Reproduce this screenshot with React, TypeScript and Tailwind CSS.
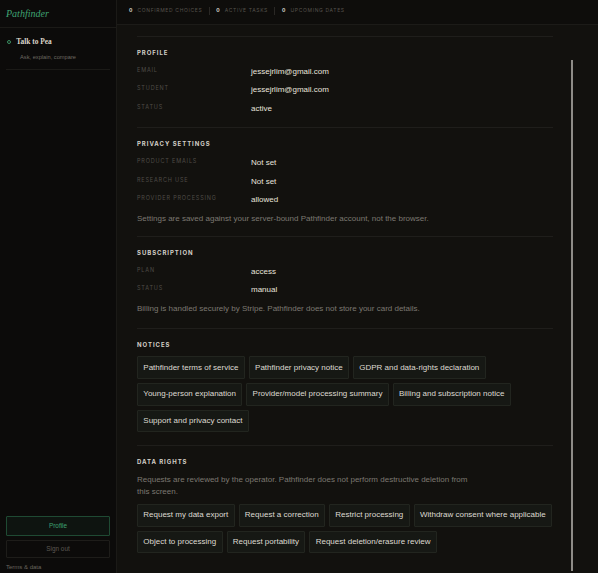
import React from "react";

const sans = { fontFamily: '"Liberation Sans", Arial, sans-serif' };

function Label({ children }: { children: React.ReactNode }) {
  return (
    <div className="w-[114px] shrink-0 font-['Inter',sans-serif] text-[5.5px] uppercase tracking-[0.15em] leading-[14px] text-[#4f4c47]">
      {children}
    </div>
  );
}

function Row({ label, value }: { label: string; value: string }) {
  return (
    <div className="flex items-start h-[18.3px]">
      <Label>{label}</Label>
      <div className="font-['Liberation_Sans',Arial,sans-serif] text-[8px] leading-[18.3px] text-[#e8e4dc]">{value}</div>
    </div>
  );
}

function Heading({ children }: { children: React.ReactNode }) {
  return (
    <div className="font-['Inter',sans-serif] font-bold text-[6px] leading-[8px] uppercase tracking-[0.16em] text-[#d3cfc7]">
      {children}
    </div>
  );
}

function Note({ children, className = "" }: { children: React.ReactNode; className?: string }) {
  return (
    <div className={"font-['Liberation_Sans',Arial,sans-serif] text-[8px] leading-[12.4px] text-[#7c7871] " + className}>
      {children}
    </div>
  );
}

function Btn({ children }: { children: React.ReactNode }) {
  return (
    <div className="h-[22.7px] flex items-center px-[5.3px] border border-[#22251f] bg-[#161814] rounded-[1px] font-['Liberation_Sans',Arial,sans-serif] text-[8px] text-[#dedad2] whitespace-nowrap">
      {children}
    </div>
  );
}

function Stat({ n, label }: { n: string; label: string }) {
  return (
    <div className="flex items-center font-['Inter',sans-serif] text-[5px] uppercase tracking-[0.13em]">
      <span className="font-bold text-[#d8d4cc] mr-[4.5px]">{n}</span>
      <span className="text-[#56534d]">{label}</span>
    </div>
  );
}

function Sep() {
  return <div className="w-px h-[8px] bg-[#2a2825] mx-[6.5px]" />;
}

export default function App() {
  return (
    <div className="flex w-full h-screen overflow-hidden bg-[#12110e]" style={sans}>
      {/* Sidebar */}
      <aside className="w-[117px] shrink-0 flex flex-col bg-[#0c0b0a] border-r border-[#1b1a17]">
        <div className="h-[28px] border-b border-[#1b1a17] flex items-center px-[6px] pb-[1px]">
          <span className="font-['Liberation_Serif',serif] italic text-[10px] text-[#3fa372]">Pathfinder</span>
        </div>
        <div className="mx-[6px] border-b border-[#1b1a17] pt-[9px] pb-[8.6px]">
          <div className="flex items-center h-[10px]">
            <div className="ml-[1.3px] w-[4px] h-[4px] rounded-full border border-[#3a8f62]" />
            <span className="ml-[5px] font-['Liberation_Serif',serif] font-bold text-[7.4px] text-[#dcd6cb]">Talk to Pea</span>
          </div>
          <div className="ml-[14px] mt-[5.7px] leading-[8px] text-[5.7px] text-[#6e6a63]">Ask, explain, compare</div>
        </div>
        <div className="mt-auto px-[6px] pb-[2px] flex flex-col">
          <div className="h-[19.5px] flex items-center justify-center border border-[#1f4a33] bg-[#0e1410] rounded-[1px] text-[6.4px] text-[#3fa372]">Profile</div>
          <div className="mt-[4px] h-[18.5px] flex items-center justify-center border border-[#1e1d1a] rounded-[1px] text-[6.4px] text-[#5c5953]">Sign out</div>
          <div className="mt-[5px] leading-[8px] text-[6px] text-[#6a665f]">Terms &amp; data</div>
        </div>
      </aside>

      {/* Main */}
      <main className="relative flex-1 flex flex-col min-w-0">
        <div className="h-[25px] shrink-0 border-b border-[#1c1b18] bg-[#0e0d0b] flex items-center pl-[12px] pb-[2px]">
          <Stat n="0" label="Confirmed choices" />
          <Sep />
          <Stat n="0" label="Active tasks" />
          <Sep />
          <Stat n="0" label="Upcoming dates" />
        </div>

        <div className="pl-[20px] pt-[11px]">
          <div className="w-[416px]">
            {/* Profile */}
            <section className="border-t border-[#1f1e1b] pt-[12px] pb-[9.5px]">
              <Heading>Profile</Heading>
              <div className="mt-[6px]">
                <Row label="Email" value="jessejrlim@gmail.com" />
                <Row label="Student" value="jessejrlim@gmail.com" />
                <Row label="Status" value="active" />
              </div>
            </section>

            {/* Privacy */}
            <section className="border-t border-[#1f1e1b] pt-[12px] pb-[10.6px]">
              <Heading>Privacy settings</Heading>
              <div className="mt-[6px]">
                <Row label="Product emails" value="Not set" />
                <Row label="Research use" value="Not set" />
                <Row label="Provider processing" value="allowed" />
              </div>
              <Note className="mt-[3.4px]">Settings are saved against your server-bound Pathfinder account, not the browser.</Note>
            </section>

            {/* Subscription */}
            <section className="border-t border-[#1f1e1b] pt-[12px] pb-[13px]">
              <Heading>Subscription</Heading>
              <div className="mt-[6px]">
                <Row label="Plan" value="access" />
                <Row label="Status" value="manual" />
              </div>
              <Note className="mt-[3.5px]">Billing is handled securely by Stripe. Pathfinder does not store your card details.</Note>
            </section>

            {/* Notices */}
            <section className="border-t border-[#1f1e1b] pt-[11.5px] pb-[12.3px]">
              <Heading>Notices</Heading>
              <div className="mt-[7.5px] flex flex-wrap gap-x-[4px] gap-y-[4px]">
                <Btn>Pathfinder terms of service</Btn>
                <Btn>Pathfinder privacy notice</Btn>
                <Btn>GDPR and data-rights declaration</Btn>
                <Btn>Young-person explanation</Btn>
                <Btn>Provider/model processing summary</Btn>
                <Btn>Billing and subscription notice</Btn>
                <Btn>Support and privacy contact</Btn>
              </div>
            </section>

            {/* Data rights */}
            <section className="border-t border-[#1f1e1b] pt-[12.5px]">
              <Heading>Data rights</Heading>
              <Note className="mt-[7.8px] max-w-[332px]">
                Requests are reviewed by the operator. Pathfinder does not perform destructive deletion from this screen.
              </Note>
              <div className="mt-[5.3px] flex flex-wrap gap-x-[4px] gap-y-[4px]">
                <Btn>Request my data export</Btn>
                <Btn>Request a correction</Btn>
                <Btn>Restrict processing</Btn>
                <Btn>Withdraw consent where applicable</Btn>
                <Btn>Object to processing</Btn>
                <Btn>Request portability</Btn>
                <Btn>Request deletion/erasure review</Btn>
              </div>
            </section>
          </div>
        </div>

        {/* overlay scrollbar */}
        <div className="absolute left-[454px] top-[60px] bottom-[2px] w-[1.5px] bg-[#8e8c87]" />
      </main>
    </div>
  );
}
